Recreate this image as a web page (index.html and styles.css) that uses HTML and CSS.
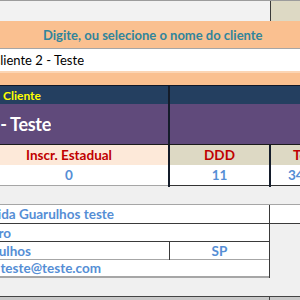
FILE: index.html
```html
<!DOCTYPE html>
<html>
<head>
<meta charset="utf-8">
<link rel="stylesheet" href="styles.css">
</head>
<body>
<div class="sheet">
  <div class="row top">
    <div class="cell grow gray"></div>
    <div class="cell tail beige bl"></div>
  </div>
  <div class="row prompt">
    <div class="prompt-text">Digite, ou selecione o nome do cliente</div>
  </div>
  <div class="row input">
    <div class="endclip w-input"><span class="input-text">Cliente 2 - Teste</span></div>
  </div>
  <div class="row strip"></div>
  <div class="row navy">
    <div class="cell left"><span class="label-yellow">Cliente</span></div>
    <div class="vline2"></div>
    <div class="cell grow"></div>
  </div>
  <div class="row purple">
    <div class="cell left"><div class="endclip w-name"><span class="name-text">Cliente 2 - Teste</span></div></div>
    <div class="vline2"></div>
    <div class="cell grow"></div>
  </div>
  <div class="row head">
    <div class="cell left peach center"><span class="shift">Inscr. Estadual</span></div>
    <div class="vline2"></div>
    <div class="cell mid beige center">DDD</div>
    <div class="vline2"></div>
    <div class="cell grow beige"><span class="tel">Telefone</span></div>
  </div>
  <div class="row vals">
    <div class="cell left center val lightb"><span class="shift">0</span></div>
    <div class="vline2"></div>
    <div class="cell mid center val darkb">11</div>
    <div class="vline2"></div>
    <div class="cell grow val darkb"><span class="tel-val">3456-7890</span></div>
  </div>
  <div class="row spacer"></div>
  <div class="addr">
    <div class="row arow r1">
      <div class="cell main"><div class="endclip w-a1">Avenida Guarulhos teste</div></div>
      <div class="vline1"></div>
      <div class="cell grow white"></div>
    </div>
    <div class="row arow r2">
      <div class="cell main"><div class="endclip w-a2">Centro</div></div>
      <div class="vline1"></div>
    </div>
    <div class="row arow r3">
      <div class="cell city"><div class="endclip w-a3">Guarulhos</div></div>
      <div class="vline1"></div>
      <div class="cell uf center">SP</div>
      <div class="vline1"></div>
    </div>
    <div class="row arow r4">
      <div class="cell main"><div class="endclip w-a4">teste@teste.com</div></div>
      <div class="vline1"></div>
    </div>
  </div>
  <div class="row bottom-gap"></div>
  <div class="row bottom-line">
    <div class="tick"></div>
  </div>
</div>
</body>
</html>
```
FILE: styles.css
```css
html, body {
  margin: 0;
  padding: 0;
  background: #f0f0f0;
}
.sheet {
  width: 300px;
  height: 300px;
  overflow: hidden;
  font-family: Lato, "Open Sans", sans-serif;
  font-weight: bold;
  font-size: 13.5px;
  background: #f0f0f0;
}
.row {
  display: flex;
  width: 300px;
}
.cell {
  display: flex;
  align-items: center;
  overflow: hidden;
  white-space: nowrap;
}
.grow { flex: 1; }
.center { justify-content: center; }
.shift { margin-right: 30px; }
.endclip {
  display: flex;
  justify-content: flex-end;
  overflow: hidden;
  white-space: nowrap;
  flex-shrink: 0;
}
.endclip > * { flex-shrink: 0; }
.gray { background: #f2f2f2; }
.beige { background: #ddd9c4; }
.peach { background: #fde9d9; }
.white { background: #fff; }

.top {
  height: 20px;
  border-top: 1px solid #9c9c9c;
}
.bl { border-left: 1px solid #3a3a3a; }
.tail { width: 29px; }

.prompt {
  height: 27px;
  background: #fac090;
  align-items: center;
  border-bottom: 1px solid #a6a6a6;
}
.prompt-text {
  padding-left: 43px;
  color: #31859c;
  font-size: 13px;
}

.input {
  height: 22px;
  background: #fff;
  align-items: center;
}
.w-input { width: 84px; }
.input-text {
  font-weight: normal;
  font-size: 13px;
  color: #000;
}

.strip {
  height: 12px;
  background: #fac090;
  border-top: 2px solid #fcd5b4;
  border-bottom: 1px solid #101828;
}

.vline2 {
  width: 2px;
  background: #141c2a;
}
.vline1 {
  width: 1px;
  background: #3a3a3a;
}
.left { width: 168px; }
.mid { width: 99px; }

.navy {
  height: 18px;
  background: #243f60;
}
.label-yellow {
  padding-left: 3px;
  color: #ffff00;
  font-size: 12px;
}
.purple {
  height: 40px;
  background: #604a7b;
  border-bottom: 1px solid #1a1a1a;
}
.w-name { width: 51px; }
.name-text {
  color: #fff;
  font-size: 18px;
  letter-spacing: -0.3px;
}

.head {
  height: 20px;
  color: #c00000;
}
.tel {
  padding-left: 22px;
}
.vals {
  height: 21px;
  background: #fff;
  color: #558ed5;
}
.lightb { border-bottom: 1px solid #a6a6a6; }
.darkb { border-bottom: 1px solid #333; }
.vals .vline2 { height: 22px; }
.tel-val { padding-left: 17px; }

.spacer {
  height: 18px;
}

.addr {
  border-top: 1px solid #a6a6a6;
  color: #558ed5;
}
.arow { height: 18px; }
.main { width: 269px; background: #fff; }
.r1 { border-bottom: 1px solid #3a3a3a; }
.r2 .main { border-bottom: 1px solid #3a3a3a; height: 17px; }
.r2 .vline1, .r3 .vline1, .r4 .vline1 { height: 18px; }
.r3 .city { width: 169px; background: #fff; border-bottom: 1px solid #a6a6a6; height: 17px; }
.r3 .uf { width: 99px; background: #fff; border-bottom: 1px solid #a6a6a6; height: 17px; }
.r4 .main { border-bottom: 2px solid #a6a6a6; height: 16px; }

.w-a1 { width: 114px; }
.w-a2 { width: 11px; }
.w-a3 { width: 31px; }
.w-a4 { width: 101px; }

.bottom-gap { height: 18px; }
.bottom-line {
  height: 3px;
  border-top: 1px solid #444;
  background: #c8c8c8;
}
.tick {
  margin-left: 269px;
  width: 1px;
  background: #444;
}
```
